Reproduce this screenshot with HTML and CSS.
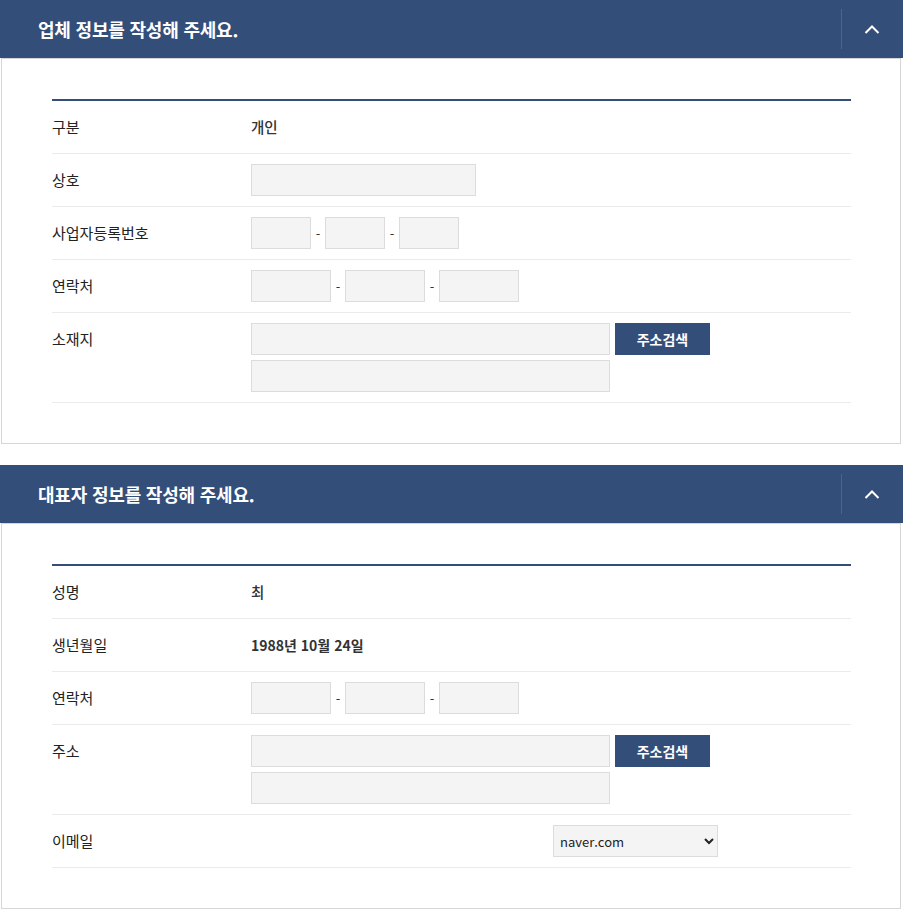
FILE: index.html
```html
<!DOCTYPE html>
<html lang="ko">
<head>
<meta charset="utf-8">
<title>정보 작성</title>
<link rel="stylesheet" href="styles.css">
</head>
<body>
<div class="wrap">
  <section class="panel">
    <header class="panel-head">
      <h2 class="panel-title">업체 정보를 작성해 주세요.</h2>
      <button class="toggle" type="button" aria-label="접기">
        <svg width="16" height="9" viewBox="0 0 16 9"><polyline points="1.5,8 8,1.5 14.5,8" fill="none" stroke="#fff" stroke-width="2"/></svg>
      </button>
    </header>
    <div class="panel-body">
      <div class="form">
        <div class="row">
          <div class="label">구분</div>
          <div class="field"><span class="value">개인</span></div>
        </div>
        <div class="row">
          <div class="label">상호</div>
          <div class="field"><input class="inp w225" type="text"></div>
        </div>
        <div class="row">
          <div class="label">사업자등록번호</div>
          <div class="field">
            <input class="inp w60" type="text"><span class="dash">-</span><input class="inp w60" type="text"><span class="dash">-</span><input class="inp w60" type="text">
          </div>
        </div>
        <div class="row">
          <div class="label">연락처</div>
          <div class="field">
            <input class="inp w80" type="text"><span class="dash">-</span><input class="inp w80" type="text"><span class="dash">-</span><input class="inp w80" type="text">
          </div>
        </div>
        <div class="row">
          <div class="label">소재지</div>
          <div class="field stack">
            <div class="line"><input class="inp w359" type="text"><button class="btn" type="button">주소검색</button></div>
            <div class="line"><input class="inp w359" type="text"></div>
          </div>
        </div>
      </div>
    </div>
  </section>

  <section class="panel">
    <header class="panel-head">
      <h2 class="panel-title">대표자 정보를 작성해 주세요.</h2>
      <button class="toggle" type="button" aria-label="접기">
        <svg width="16" height="9" viewBox="0 0 16 9"><polyline points="1.5,8 8,1.5 14.5,8" fill="none" stroke="#fff" stroke-width="2"/></svg>
      </button>
    </header>
    <div class="panel-body">
      <div class="form">
        <div class="row">
          <div class="label">성명</div>
          <div class="field"><span class="value">최</span></div>
        </div>
        <div class="row">
          <div class="label">생년월일</div>
          <div class="field"><span class="value bold">1988년 10월 24일</span></div>
        </div>
        <div class="row">
          <div class="label">연락처</div>
          <div class="field">
            <input class="inp w80" type="text"><span class="dash">-</span><input class="inp w80" type="text"><span class="dash">-</span><input class="inp w80" type="text">
          </div>
        </div>
        <div class="row">
          <div class="label">주소</div>
          <div class="field stack">
            <div class="line"><input class="inp w359" type="text"><button class="btn" type="button">주소검색</button></div>
            <div class="line"><input class="inp w359" type="text"></div>
          </div>
        </div>
        <div class="row">
          <div class="label">이메일</div>
          <div class="field">
            <div class="mail">
              <select class="sel">
                <option>naver.com</option>
              </select>
            </div>
          </div>
        </div>
      </div>
    </div>
  </section>
</div>
</body>
</html>
```

FILE: styles.css
```css
* { box-sizing: border-box; }
html, body { margin: 0; padding: 0; background: #fff; }
body {
  font-family: "Noto Sans CJK KR", "Noto Sans", sans-serif;
  color: #333;
  font-size: 14px;
}
.wrap {
  padding-left: 1px;
}
.panel {
  margin-bottom: 21px;
}
.panel-head {
  height: 58px;
  background: #344e7a;
  display: flex;
  align-items: center;
  justify-content: space-between;
  margin-left: -1px;
  width: 903px;
}
.panel-title {
  margin: 0 0 0 38px;
  color: #fff;
  font-size: 18px;
  font-weight: 700;
  letter-spacing: -0.2px;
  line-height: 22px;
}
.toggle {
  width: 62px;
  height: 40px;
  border: 0;
  border-left: 1px solid #4b6390;
  background: transparent;
  padding: 0;
  display: flex;
  align-items: center;
  justify-content: center;
  cursor: pointer;
}
.toggle svg { display: block; margin-left: -2px; }
.panel-body {
  width: 900px;
  border: 1px solid #d6d6d6;
  padding: 40px 49px 40px 50px;
}
.form {
  border-top: 2px solid #344e7a;
}
.row {
  display: flex;
  align-items: flex-start;
  padding: 10px 0;
  border-bottom: 1px solid #ebebeb;
}
.label {
  width: 199px;
  flex: none;
  line-height: 32px;
  height: 32px;
  color: #222;
  font-size: 15px;
}
.field {
  display: flex;
  align-items: center;
  min-height: 32px;
}
.field.stack {
  flex-direction: column;
  align-items: flex-start;
  gap: 5px;
}
.line {
  display: flex;
  align-items: center;
  gap: 5px;
}
.value {
  line-height: 30px;
  color: #333;
  font-weight: 500;
  font-size: 14.5px;
}
.value.bold { font-weight: 700; font-size: 14px; }
.inp {
  height: 32px;
  border: 1px solid #dcdcdc;
  background: #f4f4f4;
  margin: 0;
  padding: 0 8px;
  font: inherit;
}
.w60 { width: 60px; }
.w80 { width: 80px; }
.w225 { width: 225px; }
.w359 { width: 359px; }
.dash {
  width: 14px;
  text-align: center;
  font-size: 13px;
  color: #333;
}
.btn {
  width: 95px;
  height: 32px;
  background: #344e7a;
  color: #fff;
  border: 0;
  font: inherit;
  font-size: 14px;
  font-weight: 700;
  padding: 0;
}
.mail {
  margin-left: 302px;
}
.sel {
  width: 165px;
  height: 32px;
  border: 1px solid #dcdcdc;
  background: #f4f4f4;
  font-family: "Noto Sans CJK KR", "Noto Sans", sans-serif;
  font-size: 13px;
  color: #222;
  padding: 0 2px;
}
```
